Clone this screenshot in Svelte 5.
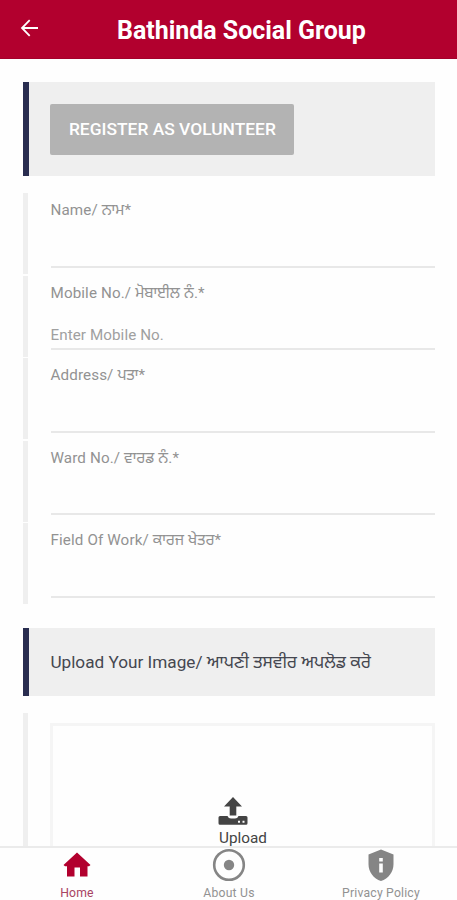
<script lang="ts">
  type Field = {
    id: string
    label: string
    native: string
    placeholder?: string
  }

  const fields: Field[] = [
    { id: "name", label: "Name/", native: "ਨਾਮ*" },
    {
      id: "mobile",
      label: "Mobile No./",
      native: "ਮੋਬਾਈਲ ਨੰ.*",
      placeholder: "Enter Mobile No.",
    },
    { id: "address", label: "Address/", native: "ਪਤਾ*" },
    { id: "ward", label: "Ward No./", native: "ਵਾਰਡ ਨੰ.*" },
    { id: "work", label: "Field Of Work/", native: "ਕਾਰਜ ਖੇਤਰ*" },
  ]
</script>

<div class="screen">
  <header>
    <button class="back" aria-label="Back">
      <svg viewBox="0 0 18 18" width="18" height="18">
        <path d="M9.7 1.2 2 9l7.7 7.8M1.8 9H18" />
      </svg>
    </button>
    <h1>Bathinda Social Group</h1>
  </header>

  <main>
    <section class="banner register">
      <button class="submit">REGISTER AS VOLUNTEER</button>
    </section>

    <form>
      {#each fields as field (field.id)}
        <div class="field">
          <label for={field.id}
            >{field.label} <span class="native">{field.native}</span></label
          >
          <input id={field.id} placeholder={field.placeholder} />
        </div>
      {/each}
    </form>

    <section class="banner upload-title">
      <h2>
        Upload Your Image/ <span class="native">ਆਪਣੀ ਤਸਵੀਰ ਅਪਲੋਡ ਕਰੋ</span>
      </h2>
    </section>

    <section class="upload">
      <div class="dropzone">
        <div class="picker">
          <svg viewBox="0 0 30 28" width="30" height="28">
            <path d="M15 0 24 9.5H18.3V18.5H11.7V9.5H6Z" />
            <path
              fill-rule="evenodd"
              d="M2 19H9.5Q10.5 21.5 13 21.5H17Q19.5 21.5 20.5 19H28Q29.5 19 29.5 20.5V26.3Q29.5 27.8 28 27.8H2Q.5 27.8.5 26.3V20.5Q.5 19 2 19ZM20 23.8V25.8H22V23.8ZM24.5 23.8V25.8H26.5V23.8Z"
            />
          </svg>
          <span>Upload</span>
        </div>
      </div>
    </section>
  </main>

  <nav>
    <a class="active" href="#home">
      <svg viewBox="0 0 34 34" width="34" height="34">
        <path
          d="M17 4.5 30.5 17 29 18.2H27.5V28.5H20V19.5H14.5V28.5H7V18.2H5L3.5 17Z"
        />
      </svg>
      <span>Home</span>
    </a>
    <a href="#about">
      <svg viewBox="0 0 34 34" width="34" height="34">
        <circle class="ring" cx="17" cy="17" r="14.8" />
        <circle cx="17" cy="17" r="5.2" />
      </svg>
      <span>About Us</span>
    </a>
    <a href="#privacy">
      <svg viewBox="0 0 34 34" width="34" height="34">
        <path
          fill-rule="evenodd"
          d="M17 1.5 29.5 6.5V16C29.5 24 24.5 30.5 17 33C9.5 30.5 4.5 24 4.5 16V6.5ZM15.2 10V13.5H18.8V10ZM15.2 15.5V24.5H18.8V15.5Z"
        />
      </svg>
      <span>Privacy Policy</span>
    </a>
  </nav>
</div>

<style>
  :global(body) {
    margin: 0;
    background: #fefefe;
  }

  .screen {
    display: flex;
    flex-direction: column;
    height: 900px;
    overflow: hidden;
    font-family: Roboto, "Noto Sans Gurmukhi", "Noto Sans", sans-serif;
    color: #929292;
  }

  button {
    border: 0;
    padding: 0;
    font-family: inherit;
  }

  header {
    display: flex;
    align-items: center;
    flex: none;
    box-sizing: border-box;
    height: 59px;
    padding-left: 20px;
    background: #b2002e;
    border-bottom: 1px solid #a4002b;
    color: #fff;
  }

  .back {
    display: flex;
    width: 97px;
    margin-top: -2px;
    background: none;

    & path {
      fill: none;
      stroke: #fff;
      stroke-width: 1.8;
    }
  }

  h1 {
    margin: 3px 0 0;
    font-size: 24.95px;
    line-height: 30px;
    font-weight: 700;
    white-space: nowrap;
  }

  main {
    flex: 1;
    min-height: 0;
    overflow: hidden;
    padding: 23px 22px 0 23px;
  }

  .banner {
    display: flex;
    align-items: center;
    box-sizing: border-box;
    border-left: 6px solid #292d50;
    padding-left: 21.4px;
    background: #efefef;
  }

  .register {
    height: 94px;
  }

  .submit {
    width: 244px;
    height: 51px;
    border-radius: 2px;
    background: #b3b3b3;
    color: #fff;
    font-size: 17.4px;
    font-weight: 500;
    white-space: nowrap;
  }

  form {
    display: flex;
    flex-direction: column;
    gap: 1.6px;
    margin-top: 17px;
  }

  .field {
    display: flex;
    flex-direction: column;
    box-sizing: border-box;
    height: 81px;
    padding: 7px 0 6.5px 22.5px;
    border-left: 5.5px solid #efefef;
  }

  label {
    height: 20px;
    font-size: 15.2px;
    line-height: 20px;
    letter-spacing: 0.12px;
    white-space: nowrap;
  }

  input {
    flex: 1;
    min-height: 0;
    border: 0;
    border-bottom: 2px solid #e8e8e8;
    padding: 19px 0 0;
    background: none;
    outline: 0;
    color: inherit;
    font-family: inherit;
    font-size: 15.2px;
    letter-spacing: 0.08px;

    &::placeholder {
      color: #a0a0a0;
    }
  }

  .upload-title {
    height: 68px;
    margin-top: 24px;
  }

  h2 {
    margin: 3px 0 0;
    color: #454750;
    font-size: 17.2px;
    font-weight: 400;
    white-space: nowrap;
  }

  .upload {
    margin-top: 17px;
    padding: 10px 0 0 22px;
    border-left: 5.5px solid #efefef;
    height: 180px;
  }

  .dropzone {
    box-sizing: border-box;
    height: 180px;
    border: 3px solid #f5f5f5;
    padding: 71px 0 0 165px;
  }

  .picker {
    display: flex;
    flex-direction: column;
    align-items: flex-start;
    color: #444;
    font-size: 15.3px;

    & svg {
      fill: #444;
    }

    & span {
      margin: 4px 0 0 1px;
      line-height: 18px;
    }
  }

  nav {
    display: grid;
    grid-template-columns: repeat(3, 1fr);
    flex: none;
    box-sizing: border-box;
    height: 54px;
    padding-left: 1px;
    border-top: 2px solid #ebebeb;
    background: #fefefe;
  }

  a {
    display: flex;
    flex-direction: column;
    align-items: center;
    color: #929292;
    font-size: 12.2px;
    letter-spacing: 0.2px;
    text-decoration: none;
    white-space: nowrap;

    & svg {
      flex: none;
      fill: #858585;
    }

    & span {
      margin-top: 3px;
      line-height: 16px;
    }

    & .ring {
      fill: none;
      stroke: #858585;
      stroke-width: 2.6;
    }

    &.active {
      color: #a84463;

      & svg {
        fill: #b2002e;
      }
    }
  }
</style>
